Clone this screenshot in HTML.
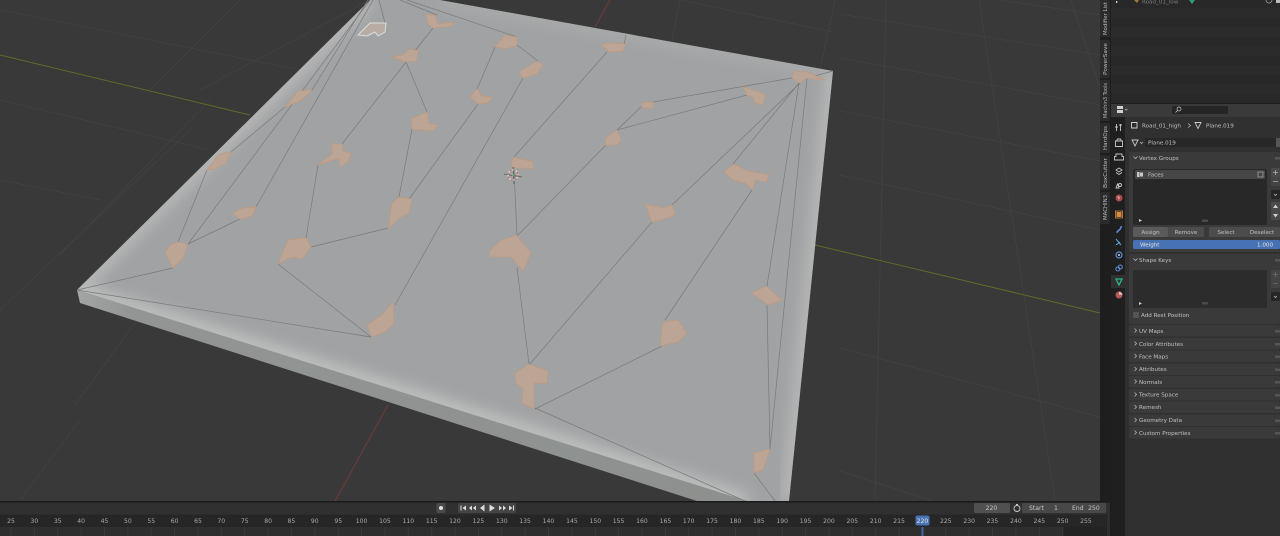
<!DOCTYPE html>
<html>
<head>
<meta charset="utf-8">
<style>
html,body{margin:0;padding:0;background:#393939;width:1280px;height:536px;overflow:hidden}
svg{display:block;filter:blur(0.35px)}
text{font-family:"DejaVu Sans","Liberation Sans",sans-serif;font-size:5.6px;fill:#c0c0c0}
.f polygon{fill:#bda595;stroke:#bf9a7e;stroke-width:.7;stroke-linejoin:round}
.w line{stroke:#787a7b;stroke-width:.7}
.g line{stroke:#424242;stroke-width:.8}
.tl text{font-size:6.1px;fill:#aaa;text-anchor:middle}
.tk line{stroke:#3a3a3a;stroke-width:1}
.p rect{fill:#3a3a3a}
.ch{fill:none;stroke:#b5b5b5;stroke-width:.8}
.v text{font-size:5.2px;fill:#b8b8b8}
</style>
</head>
<body>
<svg width="1280" height="536" viewBox="0 0 1280 536" xmlns="http://www.w3.org/2000/svg">
<defs>
<clipPath id="top"><polygon points="77,290 370,0 440,0 833,71 789,501 747,501"/></clipPath>
<filter id="b1" x="-20%" y="-20%" width="140%" height="140%"><feGaussianBlur stdDeviation="7"/></filter>
<linearGradient id="side" x1="0" y1="0" x2="1" y2="0"><stop offset="0" stop-color="#a3a5a4"/><stop offset=".08" stop-color="#929594"/><stop offset="1" stop-color="#8d908e"/></linearGradient>
</defs>
<rect width="1280" height="536" fill="#393939"/>
<!-- grid -->
<g class="g">
<line x1="840" y1="14" x2="1100" y2="55"/><line x1="840" y1="58" x2="1100" y2="105"/>
<line x1="840" y1="111" x2="1100" y2="161"/><line x1="840" y1="175" x2="1100" y2="230"/>
<line x1="840" y1="348" x2="1100" y2="417"/><line x1="840" y1="471" x2="933" y2="501"/>
<line x1="886" y1="0" x2="875" y2="500"/><line x1="979" y1="0" x2="1055" y2="500"/>
<line x1="1071" y1="0" x2="1100" y2="88"/><line x1="1000" y1="0" x2="1100" y2="15"/>
<line x1="0" y1="310" x2="190" y2="130"/><line x1="60" y1="255" x2="210" y2="100"/>
<line x1="200" y1="90" x2="370" y2="0"/><line x1="0" y1="100" x2="210" y2="150"/>
<line x1="0" y1="180" x2="100" y2="200"/><line x1="0" y1="10" x2="300" y2="70"/>
<line x1="75" y1="405" x2="137" y2="320"/><line x1="680" y1="0" x2="833" y2="32"/>
<line x1="680" y1="0" x2="672" y2="40"/><line x1="240" y1="0" x2="150" y2="90"/>
<line x1="20" y1="500" x2="80" y2="420"/><line x1="820" y1="70" x2="835" y2="0"/>
</g>
<line x1="0" y1="55" x2="250" y2="115" stroke="#5d6b2a" stroke-width="1"/>
<line x1="815" y1="245" x2="1100" y2="313" stroke="#5d6b2a" stroke-width="1"/>
<line x1="610" y1="0" x2="595" y2="27" stroke="#703c3c" stroke-width="1"/>
<line x1="388" y1="405" x2="335" y2="501" stroke="#703c3c" stroke-width="1"/>
<!-- mesh -->
<polygon points="77,290 80,303 697,501 747,501" fill="url(#side)"/>
<polygon points="77,290 370,0 440,0 833,71 789,501 747,501" fill="#a0a2a3"/>
<g clip-path="url(#top)">
<polyline points="77,290 370,0" fill="none" stroke="#bcbdbd" stroke-width="12" filter="url(#b1)"/>
<polyline points="77,290 747,501" fill="none" stroke="#c2c3c3" stroke-width="14" filter="url(#b1)"/>
<polyline points="833,71 789,501" fill="none" stroke="#bcbdbd" stroke-width="12" filter="url(#b1)"/>
<polyline points="440,0 833,71" fill="none" stroke="#b2b3b3" stroke-width="6" filter="url(#b1)"/>
</g>
<!-- wires -->
<g class="w">
<line x1="77" y1="290" x2="173" y2="268"/><line x1="77" y1="290" x2="371" y2="337"/>
<line x1="178" y1="242" x2="207" y2="170"/><line x1="188" y1="244" x2="370" y2="0"/>
<line x1="188" y1="244" x2="240" y2="219"/><line x1="256" y1="207" x2="373" y2="0"/>
<line x1="306" y1="238" x2="318" y2="165"/><line x1="368" y1="0" x2="312" y2="90"/>
<line x1="285" y1="107" x2="231" y2="152"/><line x1="379" y1="0" x2="385" y2="23"/>
<line x1="400" y1="0" x2="437" y2="15"/><line x1="407" y1="0" x2="517" y2="37"/>
<line x1="433" y1="28" x2="406" y2="62"/><line x1="406" y1="62" x2="342" y2="144"/>
<line x1="406" y1="62" x2="427" y2="112"/><line x1="412" y1="129" x2="399" y2="197"/>
<line x1="495" y1="47" x2="477" y2="89"/><line x1="478" y1="104" x2="409" y2="199"/>
<line x1="523" y1="78" x2="395" y2="305"/><line x1="517" y1="45" x2="538" y2="61"/>
<line x1="607" y1="52" x2="514" y2="157"/><line x1="606" y1="145" x2="518" y2="235"/>
<line x1="626" y1="35" x2="624" y2="45"/><line x1="514" y1="170" x2="517" y2="236"/>
<line x1="517" y1="268" x2="529" y2="364"/><line x1="529" y1="365" x2="652" y2="222"/>
<line x1="535" y1="409" x2="662" y2="346"/><line x1="665" y1="320" x2="752" y2="190"/>
<line x1="535" y1="408" x2="745" y2="501"/><line x1="800" y1="83" x2="672" y2="205"/>
<line x1="799" y1="83" x2="733" y2="164"/><line x1="799" y1="83" x2="767" y2="286"/>
<line x1="807" y1="78" x2="770" y2="449"/><line x1="767" y1="305" x2="770" y2="449"/>
<line x1="792" y1="78" x2="653" y2="102"/><line x1="747" y1="95" x2="617" y2="130"/>
<line x1="641" y1="107" x2="617" y2="130"/><line x1="833" y1="71" x2="807" y2="78"/>
<line x1="754" y1="473" x2="775" y2="501"/><line x1="278" y1="264" x2="371" y2="337"/>
<line x1="388" y1="228" x2="311" y2="247"/>
</g>
<!-- faces -->
<g class="f">
<polygon points="426,14 435,15 438,24 454,22 452,26 433,28 428,24"/>
<polygon points="392,57 403,55 409,49 419,51 416,61 406,62"/>
<polygon points="495,47 505,35 517,37 517,45 507,49"/>
<polygon points="519,72 537,61 543,65 537,74 523,78"/>
<polygon points="470,97 477,89 482,96 492,97 488,103 478,104"/>
<polygon points="411,119 427,112 429,123 438,125 433,131 412,129"/>
<polygon points="318,165 332,154 332,144 342,144 343,151 351,153 348,162 340,167 339,158"/>
<polygon points="285,107 298,91 312,90 302,100"/>
<polygon points="511,162 514,157 533,162 533,169 517,168 512,167"/>
<polygon points="165,253 170,245 178,242 188,244 183,258 173,268"/>
<polygon points="232,214 242,208 256,207 252,216 240,219"/>
<polygon points="278,264 288,240 306,238 311,247 302,259 294,257 287,259"/>
<polygon points="388,229 392,203 399,197 412,199 409,213 398,219"/>
<polygon points="367,325 382,315 393,302 394,323 385,332 372,337"/>
<polygon points="515,373 529,364 548,371 547,383 534,383 534,409 522,403 523,389 516,383"/>
<polygon points="754,453 770,449 763,470 754,473"/>
<polygon points="601,45 606,43 626,44 623,51 610,52"/>
<polygon points="792,78 795,71 807,72 825,80 807,78 799,83"/>
<polygon points="743,87 765,94 763,105 755,103 753,97 747,95"/>
<polygon points="641,103 653,102 653,108 643,108"/>
<polygon points="605,145 606,138 617,130 621,140 617,145"/>
<polygon points="724,172 734,164 748,171 769,175 766,182 755,180 753,190 745,183 733,180"/>
<polygon points="645,204 663,208 672,205 675,215 665,219 652,222"/>
<polygon points="207,170 219,154 231,152 226,163 215,169"/>
<polygon points="489,252 500,241 516,235 531,253 523,271 511,257 490,257"/>
<polygon points="660,346 663,322 678,320 687,333 678,342"/>
<polygon points="752,293 766,286 782,300 768,305"/>
</g>
<polygon points="358,35 370,23 386,23 385,32 378,36 375,32 367,36" fill="#b8aca4" stroke="#dededc" stroke-width="1"/>
<!-- 3D cursor -->
<g fill="none">
<line x1="504" y1="174" x2="522" y2="177" stroke="#5a5a5a" stroke-width=".8"/>
<line x1="513" y1="167" x2="514" y2="184" stroke="#5a5a5a" stroke-width=".8"/>
<circle cx="513" cy="175" r="5" stroke="#e8e0e0" stroke-width="1"/>
<circle cx="513" cy="175" r="5" stroke="#b85a5a" stroke-width="1" stroke-dasharray="2 2"/>
<circle cx="513" cy="175" r="1" fill="#6fbf6f"/>
</g>
<!-- Timeline -->
<rect x="0" y="501" width="1110" height="35" fill="#2e2e2e"/>
<rect x="0" y="501" width="1110" height="1.5" fill="#1a1a1a"/>
<rect x="0" y="502.5" width="1110" height="12" fill="#303030"/>
<rect x="0" y="514.5" width="1107" height="12.5" fill="#262626"/>
<rect x="1063" y="527" width="44" height="9" fill="#232323"/>
<g class="tk">
<line x1="11" y1="527" x2="11" y2="536"/><line x1="34.4" y1="527" x2="34.4" y2="536"/><line x1="57.7" y1="527" x2="57.7" y2="536"/><line x1="81.1" y1="527" x2="81.1" y2="536"/><line x1="104.5" y1="527" x2="104.5" y2="536"/><line x1="127.9" y1="527" x2="127.9" y2="536"/><line x1="151.2" y1="527" x2="151.2" y2="536"/><line x1="174.6" y1="527" x2="174.6" y2="536"/><line x1="198" y1="527" x2="198" y2="536"/><line x1="221.3" y1="527" x2="221.3" y2="536"/><line x1="244.7" y1="527" x2="244.7" y2="536"/><line x1="268.1" y1="527" x2="268.1" y2="536"/><line x1="291.4" y1="527" x2="291.4" y2="536"/><line x1="314.8" y1="527" x2="314.8" y2="536"/><line x1="338.2" y1="527" x2="338.2" y2="536"/><line x1="361.6" y1="527" x2="361.6" y2="536"/><line x1="384.9" y1="527" x2="384.9" y2="536"/><line x1="408.3" y1="527" x2="408.3" y2="536"/><line x1="431.7" y1="527" x2="431.7" y2="536"/><line x1="455" y1="527" x2="455" y2="536"/><line x1="478.4" y1="527" x2="478.4" y2="536"/><line x1="501.8" y1="527" x2="501.8" y2="536"/><line x1="525.1" y1="527" x2="525.1" y2="536"/><line x1="548.5" y1="527" x2="548.5" y2="536"/><line x1="571.9" y1="527" x2="571.9" y2="536"/><line x1="595.3" y1="527" x2="595.3" y2="536"/><line x1="618.6" y1="527" x2="618.6" y2="536"/><line x1="642" y1="527" x2="642" y2="536"/><line x1="665.4" y1="527" x2="665.4" y2="536"/><line x1="688.7" y1="527" x2="688.7" y2="536"/><line x1="712.1" y1="527" x2="712.1" y2="536"/><line x1="735.5" y1="527" x2="735.5" y2="536"/><line x1="758.8" y1="527" x2="758.8" y2="536"/><line x1="782.2" y1="527" x2="782.2" y2="536"/><line x1="805.6" y1="527" x2="805.6" y2="536"/><line x1="829" y1="527" x2="829" y2="536"/><line x1="852.3" y1="527" x2="852.3" y2="536"/><line x1="875.7" y1="527" x2="875.7" y2="536"/><line x1="899.1" y1="527" x2="899.1" y2="536"/><line x1="945.8" y1="527" x2="945.8" y2="536"/><line x1="969.2" y1="527" x2="969.2" y2="536"/><line x1="992.5" y1="527" x2="992.5" y2="536"/><line x1="1015.9" y1="527" x2="1015.9" y2="536"/><line x1="1039.3" y1="527" x2="1039.3" y2="536"/><line x1="1062.7" y1="527" x2="1062.7" y2="536"/>
</g>
<g class="tl">
<text x="11" y="523">25</text><text x="34.4" y="523">30</text><text x="57.7" y="523">35</text><text x="81.1" y="523">40</text><text x="104.5" y="523">45</text><text x="127.9" y="523">50</text><text x="151.2" y="523">55</text><text x="174.6" y="523">60</text><text x="198" y="523">65</text><text x="221.3" y="523">70</text><text x="244.7" y="523">75</text><text x="268.1" y="523">80</text><text x="291.4" y="523">85</text><text x="314.8" y="523">90</text><text x="338.2" y="523">95</text><text x="361.6" y="523">100</text><text x="384.9" y="523">105</text><text x="408.3" y="523">110</text><text x="431.7" y="523">115</text><text x="455" y="523">120</text><text x="478.4" y="523">125</text><text x="501.8" y="523">130</text><text x="525.1" y="523">135</text><text x="548.5" y="523">140</text><text x="571.9" y="523">145</text><text x="595.3" y="523">150</text><text x="618.6" y="523">155</text><text x="642" y="523">160</text><text x="665.4" y="523">165</text><text x="688.7" y="523">170</text><text x="712.1" y="523">175</text><text x="735.5" y="523">180</text><text x="758.8" y="523">185</text><text x="782.2" y="523">190</text><text x="805.6" y="523">195</text><text x="829" y="523">200</text><text x="852.3" y="523">205</text><text x="875.7" y="523">210</text><text x="899.1" y="523">215</text><text x="945.8" y="523">225</text><text x="969.2" y="523">230</text><text x="992.5" y="523">235</text><text x="1015.9" y="523">240</text><text x="1039.3" y="523">245</text><text x="1062.7" y="523">250</text><text x="1086" y="523">255</text>
</g>
<rect x="921.5" y="527" width="2" height="9" fill="#3e66a8"/>
<rect x="915.5" y="515.5" width="14" height="10" rx="2" fill="#4772b3"/>
<text x="922.5" y="523" text-anchor="middle" style="font-size:6.1px;fill:#e8e8e8">220</text>
<!-- transport -->
<rect x="436.5" y="503" width="9" height="10" rx="1.5" fill="#4a4a4a"/>
<circle cx="441" cy="508" r="2" fill="#e0e0e0"/>
<rect x="458" y="503" width="58" height="10" rx="1.5" fill="#444"/>
<g fill="#dcdcdc">
<rect x="460.5" y="505.5" width="1" height="5"/><polygon points="466,505.5 466,510.5 462.5,508"/>
<polygon points="472,505.5 472,510.5 469,508"/><polygon points="476,505.5 476,510.5 473,508"/>
<polygon points="484.5,504.5 484.5,511.5 480,508"/>
<polygon points="489.5,504.5 489.5,511.5 495,508"/>
<polygon points="499,505.5 499,510.5 502,508"/><polygon points="503,505.5 503,510.5 506,508"/>
<polygon points="509,505.5 509,510.5 512.5,508"/><rect x="513" y="505.5" width="1" height="5"/>
</g>
<rect x="974" y="503" width="36" height="10" rx="1.5" fill="#505050"/>
<text x="991.5" y="510" text-anchor="middle" style="font-size:6.1px;fill:#c8c8c8">220</text>
<circle cx="1017" cy="508.5" r="3" fill="none" stroke="#c8c8c8" stroke-width=".9"/>
<rect x="1016" y="504" width="2" height="1" fill="#c8c8c8"/>
<rect x="1022" y="503" width="84" height="10" rx="1.5" fill="#484848"/>
<text x="1029" y="510" style="font-size:6.1px;fill:#c8c8c8">Start</text>
<text x="1056" y="510" text-anchor="middle" style="font-size:6.1px;fill:#c8c8c8">1</text>
<text x="1072" y="510" style="font-size:6.1px;fill:#c8c8c8">End</text>
<text x="1094" y="510" text-anchor="middle" style="font-size:6.1px;fill:#c8c8c8">250</text>
<!-- N-panel strip -->
<rect x="1100" y="0" width="12" height="501" fill="#1e1e1e"/>
<g fill="#2b2b2b">
<rect x="1100" y="0" width="10" height="37" rx="1.5"/>
<rect x="1100" y="40" width="10" height="38" rx="1.5"/>
<rect x="1100" y="80" width="10" height="41" rx="1.5"/>
<rect x="1100" y="123" width="10" height="30" rx="1.5"/>
<rect x="1100" y="155" width="10" height="35" rx="1.5"/>
<rect x="1100" y="192" width="10" height="32" rx="1.5"/>
</g>
<g class="v">
<text transform="translate(1107,35) rotate(-90)" textLength="33" lengthAdjust="spacingAndGlyphs">Modifier List</text>
<text transform="translate(1107,75) rotate(-90)" textLength="32" lengthAdjust="spacingAndGlyphs">PowerSave</text>
<text transform="translate(1107,118) rotate(-90)" textLength="35" lengthAdjust="spacingAndGlyphs">Machin3 Tools</text>
<text transform="translate(1107,150) rotate(-90)" textLength="24" lengthAdjust="spacingAndGlyphs">HardOps</text>
<text transform="translate(1107,188) rotate(-90)" textLength="30" lengthAdjust="spacingAndGlyphs">BoxCutter</text>
<text transform="translate(1107,220) rotate(-90)" textLength="25" lengthAdjust="spacingAndGlyphs">MACHIN3</text>
</g>
<!-- Outliner -->
<rect x="1110" y="0" width="170" height="536" fill="#1d1d1d"/>
<rect x="1111" y="0" width="169" height="103" fill="#282828"/>
<rect x="1111" y="8" width="169" height="10" fill="#2b2b2b"/>
<rect x="1111" y="27" width="169" height="10" fill="#2b2b2b"/>
<rect x="1111" y="46" width="169" height="10" fill="#2b2b2b"/>
<rect x="1111" y="65" width="169" height="10" fill="#2b2b2b"/>
<rect x="1111" y="84" width="169" height="10" fill="#2b2b2b"/>
<text x="1142" y="3.5" style="fill:#7d7d7d">Road_01_low</text>
<polygon points="1134,0 1139,0 1137,3" fill="#a8743c"/>
<polygon points="1189,0 1195,0 1192,4" fill="#2f9e78"/>
<rect x="1116" y="1" width="1.3" height="2" fill="#d0d0d0"/>
<circle cx="1269" cy="0" r="3" fill="none" stroke="#aaa" stroke-width=".7"/>
<rect x="1276" y="0" width="4" height="3" fill="#bbb"/>
<!-- Props header -->
<rect x="1111" y="104" width="169" height="13" fill="#3a3a3a"/>
<rect x="1117" y="106" width="6" height="3" fill="#d0d0d0"/><rect x="1117" y="110" width="6" height="3" fill="#d0d0d0"/>
<path d="M1125 109l1.200 1.200 1.200-1.200" class="ch"/>
<rect x="1172" y="106" width="56" height="8" rx="1.5" fill="#252525"/>
<circle cx="1179" cy="109" r="2" fill="none" stroke="#cfcfcf" stroke-width=".7"/>
<line x1="1177.5" y1="110.5" x2="1175.5" y2="112.5" stroke="#cfcfcf" stroke-width=".7"/>
<!-- Props body -->
<rect x="1111" y="117" width="14" height="419" fill="#1f1f1f"/>
<rect x="1125" y="117" width="155" height="419" fill="#303030"/>
<!-- tab icons -->
<g fill="none" stroke="#c6c6c6" stroke-width=".9">
<path d="M1116.5 124v7M1120.5 124v7M1115 127h3M1119 125h3"/>
<path d="M1115.500 141h7v5.500h-7zM1116.500 141l1-2h3l1 2"/>
<path d="M1116 154h6v2.500h1.500v3.500h-9v-3.500h1.500z"/>
<path d="M1116 170l3-2 3 2-3 2zM1116 172.500l3 2 3-2"/>
<path d="M1116 188l1.500-4 1.500 4zM1120 185m-1.500 0a1.500 1.500 0 1 0 3 0a1.500 1.500 0 1 0-3 0" stroke="#c8c8c8"/>
</g>
<circle cx="1119" cy="198" r="3.5" fill="#a84a4a"/>
<path d="M1117 196l3 1-1 3z" fill="#d8a0a0"/>
<rect x="1115.500" y="211" width="7" height="7" fill="none" stroke="#c98a42" stroke-width=".8"/>
<rect x="1116.500" y="212" width="5" height="5" fill="#d98a3c"/>
<path d="M1116 232l4-4 .5-2 2 .5-1 1.500-.5 1.200-4 4z" fill="#5d8fd6"/>
<path d="M1116 239l5 6M1116 245l4-3" stroke="#5fa7d8" stroke-width="1" fill="none"/>
<circle cx="1119" cy="255" r="3" fill="none" stroke="#5d8fd6" stroke-width="1.2"/>
<circle cx="1119" cy="255" r="1" fill="#c8d8ee"/>
<circle cx="1117.800" cy="269" r="2" fill="none" stroke="#5d8fd6" stroke-width="1"/>
<circle cx="1120.300" cy="267" r="2" fill="none" stroke="#5d8fd6" stroke-width="1"/>
<rect x="1111" y="275" width="14" height="13" fill="#303030"/>
<path d="M1116 279h6l-3 6z" fill="none" stroke="#2eb48c" stroke-width="1.3"/>
<circle cx="1119" cy="295" r="3.5" fill="#b55858"/>
<path d="M1119 295v-3.500a3.500 3.500 0 0 1 3.500 3.500z" fill="#ddb0b0"/>
<!-- breadcrumbs -->
<path d="M1131.500 122.500h5.500v5.500h-5.500z" fill="none" stroke="#d0d0d0" stroke-width=".9"/>
<text x="1142" y="127.500">Road_01_high</text>
<path d="M1188 123.500l2.500 2-2.500 2" class="ch"/>
<path d="M1195 122.500h6l-3 6z" fill="none" stroke="#c8c8c8" stroke-width=".9"/>
<text x="1206" y="127.500">Plane.019</text>
<path d="M1132 140h6l-3 6z" fill="none" stroke="#c8c8c8" stroke-width=".9"/>
<path d="M1140 142l1.500 1.500 1.500-1.500" class="ch"/>
<rect x="1145" y="138" width="131" height="9" rx="1.5" fill="#272727"/>
<text x="1148" y="144.500">Plane.019</text>
<rect x="1276" y="138" width="4" height="9" fill="#555"/>
<!-- Vertex Groups panel -->
<rect x="1129" y="152" width="151" height="100" rx="2" fill="#3a3a3a"/>
<path d="M1133.500 156.500l2 2 2-2" class="ch"/>
<text x="1139" y="160">Vertex Groups</text>
<rect x="1133" y="169" width="134" height="56" rx="2" fill="#282828"/>
<rect x="1135" y="170" width="130" height="9" rx="1" fill="#464646"/>
<rect x="1137" y="172" width="2.500" height="5" fill="#c8c8c8"/><rect x="1140" y="172.500" width="3" height="4" fill="#c8c8c8"/>
<text x="1148" y="176.500">Faces</text>
<rect x="1258" y="172" width="5" height="5" fill="none" stroke="#aaa" stroke-width=".7"/>
<rect x="1271" y="168" width="9" height="9" fill="#4a4a4a" rx="1"/>
<rect x="1271" y="177" width="9" height="9" fill="#444" rx="1"/>
<path d="M1273 172.500h5M1275.500 170v5M1273 181.500h5" stroke="#b0b0b0" stroke-width=".8"/>
<rect x="1271" y="190" width="9" height="9" fill="#262626" rx="1"/>
<path d="M1274 194l1.500 1.500 1.500-1.500" class="ch"/>
<rect x="1271" y="202" width="9" height="9" fill="#4a4a4a" rx="1"/>
<rect x="1271" y="211" width="9" height="9" fill="#4a4a4a" rx="1"/>
<polygon points="1275.500,204.500 1273,208 1278,208" fill="#d0d0d0"/>
<polygon points="1275.500,217.500 1273,214 1278,214" fill="#d0d0d0"/>
<polygon points="1139,219 1139,222 1142,220.500" fill="#d0d0d0"/>
<rect x="1202" y="219.500" width="6" height="2.500" fill="#4a4a4a"/>
<rect x="1133" y="227" width="35" height="10" rx="1.500" fill="#5a5a5a"/>
<rect x="1168" y="227" width="36" height="10" rx="1.500" fill="#4c4c4c"/>
<rect x="1209" y="227" width="36" height="10" rx="1.500" fill="#4c4c4c"/>
<rect x="1245" y="227" width="35" height="10" fill="#4c4c4c"/>
<text x="1150.500" y="234" text-anchor="middle">Assign</text>
<text x="1186" y="234" text-anchor="middle">Remove</text>
<text x="1226" y="234" text-anchor="middle">Select</text>
<text x="1262" y="234" text-anchor="middle">Deselect</text>
<rect x="1133" y="240" width="147" height="9" rx="1.500" fill="#4772b3"/>
<text x="1140" y="246.500" style="fill:#e4e4e4">Weight</text>
<text x="1273" y="246.500" text-anchor="end" style="fill:#e4e4e4">1.000</text>
<!-- Shape Keys panel -->
<rect x="1129" y="254" width="151" height="70" rx="2" fill="#3a3a3a"/>
<path d="M1133.500 258.500l2 2 2-2" class="ch"/>
<text x="1139" y="262">Shape Keys</text>
<rect x="1133" y="270" width="134" height="38" rx="2" fill="#2c2c2c"/>
<rect x="1271" y="270" width="9" height="9" fill="#444" rx="1"/>
<rect x="1271" y="279" width="9" height="9" fill="#444" rx="1"/>
<path d="M1273 274.500h5M1275.500 272v5M1273 283.500h5" stroke="#6e6e6e" stroke-width=".8"/>
<rect x="1271" y="292" width="9" height="9" fill="#262626" rx="1"/>
<path d="M1274 296l1.500 1.500 1.500-1.500" class="ch"/>
<polygon points="1139,302 1139,305 1142,303.500" fill="#d0d0d0"/>
<rect x="1202" y="302" width="6" height="2.500" fill="#4a4a4a"/>
<rect x="1133" y="312" width="6" height="6" rx="1" fill="#545454"/>
<text x="1141" y="317">Add Rest Position</text>
<!-- collapsed panels -->
<g class="p">
<rect x="1129" y="325" width="151" height="11.500" rx="2"/>
<rect x="1129" y="338" width="151" height="11.500" rx="2"/>
<rect x="1129" y="350.500" width="151" height="11.500" rx="2"/>
<rect x="1129" y="363.500" width="151" height="11.500" rx="2"/>
<rect x="1129" y="376" width="151" height="11.500" rx="2"/>
<rect x="1129" y="389" width="151" height="11.500" rx="2"/>
<rect x="1129" y="401.500" width="151" height="11.500" rx="2"/>
<rect x="1129" y="414.500" width="151" height="11.500" rx="2"/>
<rect x="1129" y="427" width="151" height="11.500" rx="2"/>
</g>
<g>
<path d="M1134.500 328.500l2 2-2 2M1134.500 341.500l2 2-2 2M1134.500 354l2 2-2 2M1134.500 367l2 2-2 2M1134.500 379.500l2 2-2 2M1134.500 392.500l2 2-2 2M1134.500 405l2 2-2 2M1134.500 418l2 2-2 2M1134.500 430.500l2 2-2 2" class="ch"/>
<text x="1139" y="333">UV Maps</text>
<text x="1139" y="346">Color Attributes</text>
<text x="1139" y="358.500">Face Maps</text>
<text x="1139" y="371">Attributes</text>
<text x="1139" y="384">Normals</text>
<text x="1139" y="396.500">Texture Space</text>
<text x="1139" y="409">Remesh</text>
<text x="1139" y="422">Geometry Data</text>
<text x="1139" y="435">Custom Properties</text>
</g>
<g fill="#555">
<rect x="1275" y="157" width="5" height="2.500"/><rect x="1275" y="259" width="5" height="2.500"/><rect x="1275" y="330" width="5" height="2.500"/><rect x="1275" y="343" width="5" height="2.500"/><rect x="1275" y="355.500" width="5" height="2.500"/><rect x="1275" y="368.500" width="5" height="2.500"/><rect x="1275" y="381" width="5" height="2.500"/><rect x="1275" y="394" width="5" height="2.500"/><rect x="1275" y="406.500" width="5" height="2.500"/><rect x="1275" y="419.500" width="5" height="2.500"/><rect x="1275" y="432" width="5" height="2.500"/>
</g>
</svg>
</body>
</html>
